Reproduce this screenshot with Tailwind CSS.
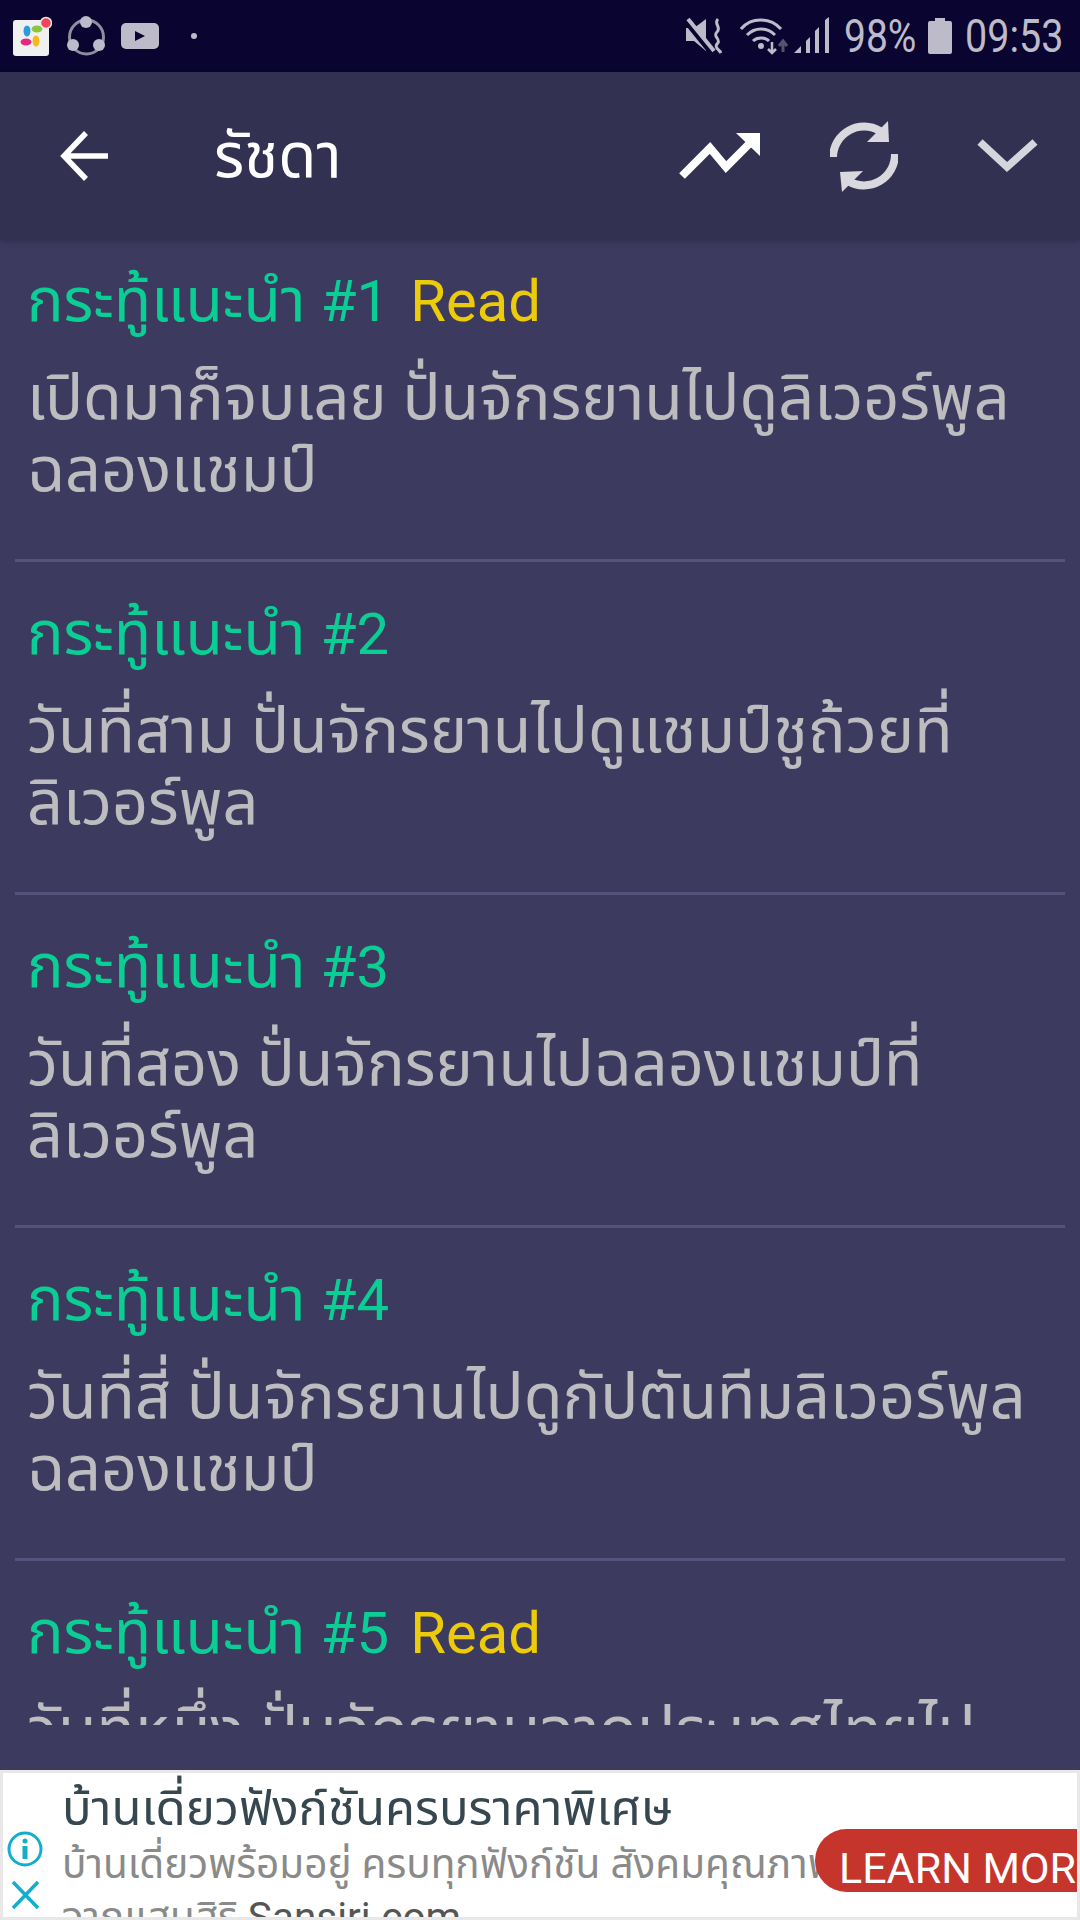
<!DOCTYPE html>
<html lang="en">
<head>
    <meta charset="UTF-8">
    <meta name="viewport" content="width=device-width, initial-scale=1.0">
    <script src="https://cdn.jsdelivr.net/npm/@tailwindcss/browser@4"></script>
    <title>รัชดา</title>
</head>
<body class="m-0 bg-[#3d3a60] font-['Roboto','Noto_Sans_Thai','Noto_Sans',sans-serif]">
<div class="w-[1080px] h-[1920px] flex flex-col overflow-hidden">

    <!-- Status bar -->
    <div class="h-[72px] shrink-0 bg-[#0a0530] flex items-center justify-between pl-[12px] pr-[20px] text-[#bdbbc9]">
        <div class="flex items-center">
            <svg width="40" height="40" viewBox="0 0 40 40">
                <rect x="1" y="4" width="36" height="36" rx="3" fill="#f1f0f1"/>
                <ellipse cx="15" cy="15" rx="3.5" ry="5.5" fill="#2a9bdc"/>
                <ellipse cx="25" cy="13" rx="5.5" ry="3.5" fill="#8cc63f"/>
                <ellipse cx="14" cy="26" rx="5.5" ry="3.5" fill="#e5287f"/>
                <ellipse cx="24" cy="25" rx="3.5" ry="5.5" fill="#f6b91c"/>
                <circle cx="34" cy="7" r="5.5" fill="#f2435a" stroke="#e8e8ec" stroke-width="1.5"/>
            </svg>
            <svg class="ml-[14px]" width="42" height="42" viewBox="0 0 42 42">
                <circle cx="20.5" cy="22" r="17" fill="none" stroke="#8f8da0" stroke-width="3"/>
                <circle cx="20" cy="7" r="6" fill="currentColor"/>
                <circle cx="7" cy="30" r="6" fill="currentColor"/>
                <circle cx="33" cy="30" r="6" fill="currentColor"/>
            </svg>
            <svg class="ml-[12px]" width="40" height="28" viewBox="0 0 40 28">
                <rect x="1" y="1" width="38" height="26" rx="5" fill="currentColor"/>
                <path d="M15 9 L25 14 L15 19 Z" fill="#0a0530"/>
            </svg>
            <span class="ml-[31px] w-[6px] h-[6px] rounded-full bg-[#bdbbc9]"></span>
        </div>
        <div class="flex items-center">
            <svg width="38" height="38" viewBox="0 0 38 38">
                <path d="M0 11 H8 L20 2 V34 L8 24 H0 Z" fill="currentColor"/>
                <path d="M0 4 L26 36" stroke="#0a0530" stroke-width="6"/>
                <path d="M2 2 L28 34" stroke="currentColor" stroke-width="4"/>
                <path d="M32 2 C27 7 36 10 31 15 C26 20 36 22 31 27 C28 31 33 32 35 36" fill="none" stroke="currentColor" stroke-width="3"/>
            </svg>
            <svg class="ml-[16px]" width="50" height="38" viewBox="0 0 50 38">
                <path d="M1 12 C11 0 30 0 41 12" fill="none" stroke="currentColor" stroke-width="3"/>
                <path d="M7 18 C15 10 27 10 35 18" fill="none" stroke="currentColor" stroke-width="3"/>
                <path d="M13 24 C17 20 25 20 29 24" fill="none" stroke="currentColor" stroke-width="3"/>
                <circle cx="21" cy="29" r="3" fill="currentColor"/>
                <path d="M32 25 V35 M28 32 L32 36 L36 32" fill="none" stroke="currentColor" stroke-width="2.5"/>
                <path d="M43 35 V25 M39 29 L43 24 L47 29" fill="none" stroke="#55536d" stroke-width="3"/>
            </svg>
            <svg class="ml-[3px]" width="37" height="38" viewBox="0 0 37 38">
                <path d="M1 36 L8 29 V36 Z M13 24 L17 20 V36 H13 Z M22 14 L26 10 V36 H22 Z M32 3 L36 0 V36 H32 Z" fill="currentColor"/>
            </svg>
            <span class="ml-[14px] w-[71px] text-[47px] leading-[46px] whitespace-nowrap scale-x-[0.83] origin-left">98%</span>
            <svg class="ml-[13px]" width="24" height="36" viewBox="0 0 24 36">
                <path d="M7 0 H17 V3 H22 Q24 3 24 5 V34 Q24 36 22 36 H2 Q0 36 0 34 V5 Q0 3 2 3 H7 Z" fill="currentColor"/>
            </svg>
            <span class="ml-[13px] w-[95px] text-[47px] leading-[46px] whitespace-nowrap scale-x-[0.84] origin-left">09:53</span>
        </div>
    </div>

    <!-- Header -->
    <div class="relative z-10 h-[168px] shrink-0 bg-[#333152] shadow-[0_2px_6px_rgba(0,0,0,0.2)] flex items-center">
        <svg class="ml-[58px]" width="54" height="52" viewBox="0 0 54 52">
            <path d="M50 26 H7 M28 3 L6 26 L28 49" fill="none" stroke="#ffffff" stroke-width="5.5"/>
        </svg>
        <span class="ml-[102px] text-[62px] leading-[72px] text-white">รัชดา</span>
        <div class="ml-auto flex items-center pr-[41px]">
            <svg width="84" height="52" viewBox="0 0 84 52">
                <path d="M5 46 L33 18 L49 37 L76 10" fill="none" stroke="#ffffff" stroke-width="8"/>
                <path d="M59 3 H83 V26 Z" fill="#ffffff"/>
            </svg>
            <svg class="ml-[69px]" width="68" height="74" viewBox="0 0 68 74">
                <path d="M3 38 A31 31 0 0 1 50 12" fill="none" stroke="#d8d8de" stroke-width="8"/>
                <path d="M58 2 L59 23 L37 23 Z" fill="#d8d8de"/>
                <path d="M65 35 A31 31 0 0 1 18 62" fill="none" stroke="#d8d8de" stroke-width="8"/>
                <path d="M12 73 L10 53 L33 52 Z" fill="#d8d8de"/>
            </svg>
            <svg class="ml-[77px]" width="64" height="36" viewBox="0 0 64 36">
                <path d="M5 4 L32 29 L60 4" fill="none" stroke="#d5d5dc" stroke-width="7.5"/>
            </svg>
        </div>
    </div>

    <!-- List -->
    <div class="h-[1485px] shrink-0 overflow-hidden">
        <div class="mt-[-11px] px-[15px]">
            <div class="h-[333px] px-[12px] border-b-[3px] border-[#55527c]">
                <div class="pt-[35px] text-[61px] leading-[72px] text-[#0bce95]">กระทู้แนะนำ <span class="text-[58px]">#1</span> <span class="ml-[6px] text-[58px] text-[#eccb0b]">Read</span></div>
                <div class="mt-[25px] text-[63px] leading-[72px] text-[#bdbdc0]">เปิดมาก็จบเลย ปั่นจักรยานไปดูลิเวอร์พูล<br>ฉลองแชมป์</div>
            </div>
            <div class="h-[333px] px-[12px] border-b-[3px] border-[#55527c]">
                <div class="pt-[35px] text-[61px] leading-[72px] text-[#0bce95]">กระทู้แนะนำ <span class="text-[58px]">#2</span></div>
                <div class="mt-[25px] text-[63px] leading-[72px] text-[#bdbdc0]">วันที่สาม ปั่นจักรยานไปดูแชมป์ชูถ้วยที่<br>ลิเวอร์พูล</div>
            </div>
            <div class="h-[333px] px-[12px] border-b-[3px] border-[#55527c]">
                <div class="pt-[35px] text-[61px] leading-[72px] text-[#0bce95]">กระทู้แนะนำ <span class="text-[58px]">#3</span></div>
                <div class="mt-[25px] text-[63px] leading-[72px] text-[#bdbdc0]">วันที่สอง ปั่นจักรยานไปฉลองแชมป์ที่<br>ลิเวอร์พูล</div>
            </div>
            <div class="h-[333px] px-[12px] border-b-[3px] border-[#55527c]">
                <div class="pt-[35px] text-[61px] leading-[72px] text-[#0bce95]">กระทู้แนะนำ <span class="text-[58px]">#4</span></div>
                <div class="mt-[25px] text-[63px] leading-[72px] text-[#bdbdc0]">วันที่สี่ ปั่นจักรยานไปดูกัปตันทีมลิเวอร์พูล<br>ฉลองแชมป์</div>
            </div>
            <div class="h-[333px] px-[12px]">
                <div class="pt-[35px] text-[61px] leading-[72px] text-[#0bce95]">กระทู้แนะนำ <span class="text-[58px]">#5</span> <span class="ml-[6px] text-[58px] text-[#eccb0b]">Read</span></div>
                <div class="mt-[25px] text-[63px] leading-[72px] text-[#bdbdc0]">วันที่หนึ่ง ปั่นจักรยานจากประเทศไทยไป</div>
            </div>
        </div>
    </div>

    <!-- Spacer under list -->
    <div class="h-[45px] shrink-0"></div>

    <!-- Ad banner -->
    <div class="relative h-[150px] shrink-0 bg-white border-[3px] border-[#e8e8e8] overflow-hidden flex">
        <div class="w-[59px] shrink-0 flex flex-col items-start pl-[4px] pt-[58px]">
            <svg width="36" height="36" viewBox="0 0 36 36">
                <circle cx="18" cy="18" r="16" fill="none" stroke="#12aecb" stroke-width="3"/>
                <circle cx="18" cy="10" r="2.5" fill="#12aecb"/>
                <rect x="15.5" y="15" width="5" height="13" fill="#12aecb"/>
            </svg>
            <svg class="mt-[13px] ml-[3px]" width="30" height="30" viewBox="0 0 30 30">
                <path d="M3 2 L28 28 M28 2 L3 28" fill="none" stroke="#12aecb" stroke-width="3.5"/>
            </svg>
        </div>
        <div class="min-w-0 flex-1 whitespace-nowrap">
            <div class="pt-[6px] text-[49px] leading-[60px] text-[#37474f]">บ้านเดี่ยวฟังก์ชันครบราคาพิเศษ</div>
            <div class="mt-[-2px] text-[40.5px] leading-[54px] text-[#8a8a8a]">บ้านเดี่ยวพร้อมอยู่ ครบทุกฟังก์ชัน สังคมคุณภาพ</div>
            <div class="mt-[-1px] text-[40.5px] leading-[54px] text-[#8a8a8a]">จากแสนสิริ <span class="text-[#555555]">Sansiri.com</span></div>
        </div>
        <div class="absolute right-0 top-[56px] w-[262px] h-[63px] rounded-l-[32px] bg-[#c5352c] pl-[24px] overflow-hidden">
            <div class="w-[238px] overflow-hidden whitespace-nowrap text-[43px] leading-[78px] text-white">LEARN MORE</div>
        </div>
    </div>
</div>
</body>
</html>
